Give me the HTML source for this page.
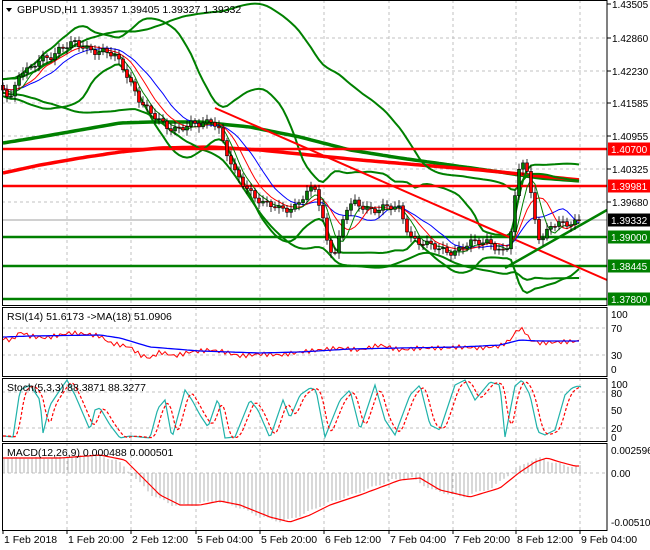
<!DOCTYPE html>
<html><head><meta charset="utf-8"><style>
html,body{margin:0;padding:0;background:#fff;}
svg{display:block;font-family:"Liberation Sans",sans-serif;}
</style></head><body>
<svg id="s" width="650" height="550" viewBox="0 0 650 550" xmlns="http://www.w3.org/2000/svg"></svg>
<script>
var S=document.getElementById('s'),out=[];
function add(t){out.push(t);}
function pl(pts,c,w,extra){add('<polyline fill="none" stroke="'+c+'" stroke-width="'+w+'" '+(extra||'')+' points="'+pts.map(function(p){return p[0].toFixed(1)+','+p[1].toFixed(1)}).join(' ')+'"/>');}
function interp(k,x){if(x<=k[0][0])return k[0][1];for(var i=1;i<k.length;i++){if(x<=k[i][0]){var a=k[i-1],b=k[i];return a[1]+(b[1]-a[1])*(x-a[0])/(b[0]-a[0]);}}return k[k.length-1][1];}
function curve(k,x0,x1,st){var r=[];for(var x=x0;x<=x1;x+=st)r.push([x,interp(k,x)]);return r;}
var vx=[67,131,196,260,324,389,453,516,580];
var panels=[[0,305],[307,376],[378,441],[443,530]];
vx.forEach(function(x){panels.forEach(function(p){add('<line x1="'+x+'" y1="'+p[0]+'" x2="'+x+'" y2="'+p[1]+'" stroke="#c0c0c0" stroke-dasharray="3,3"/>');});});
[38,71,103,136,169,202].forEach(function(y){add('<line x1="2" y1="'+y+'" x2="607" y2="'+y+'" stroke="#c0c0c0" stroke-dasharray="3,3"/>');});
[328,355,392,428,473].forEach(function(y){add('<line x1="2" y1="'+y+'" x2="607" y2="'+y+'" stroke="#c0c0c0" stroke-dasharray="3,3"/>');});
add('<line x1="2" y1="220" x2="607" y2="220" stroke="#c0c0c0" stroke-width="1.5"/>');
var P=[[-80,85],[3,90],[12,95],[20,70],[30,72],[40,60],[50,55],[60,48],[75,45],[90,48],[105,52],[115,58],[125,70],[135,90],[140,100],[150,115],[165,125],[180,128],[200,125],[212,118],[218,125],[225,150],[235,175],[245,185],[255,195],[265,205],[280,210],[295,205],[305,195],[315,190],[322,215],[328,245],[335,250],[340,235],[345,210],[355,205],[370,208],[385,208],[400,210],[410,235],[425,245],[440,250],[455,250],[470,245],[490,240],[500,250],[505,255],[510,240],[515,200],[520,165],[524,158],[528,172],[532,200],[538,235],[544,240],[550,228],[560,224],[570,221],[580,220]];
var cl=[],xs=[];
for(var i=-60;;i++){var x=3+4*i;if(x>580)break;var n=Math.sin(i*1.7)*3+Math.sin(i*0.63)*2.5;cl.push(interp(P,x)+n);xs.push(x);}
cl[cl.length-1]=220;
function sma(a,p){return a.map(function(v,i){var s=0,c=0;for(var j=Math.max(0,i-p+1);j<=i;j++){s+=a[j];c++;}return s/c;});}
function sd(a,p,m){return a.map(function(v,i){var s=0,c=0;for(var j=Math.max(0,i-p+1);j<=i;j++){s+=(a[j]-m[i])*(a[j]-m[i]);c++;}return Math.sqrt(s/c);});}
function vis(a){var r=[];for(var i=0;i<a.length;i++)if(xs[i]>=3)r.push([xs[i],Math.max(-5,Math.min(306,a[i]))]);return r;}
pl(curve([[3,143],[40,137],[80,130],[120,123],[150,122],[200,122],[250,127],[300,137],[350,150],[400,158],[450,165],[500,172],[540,178],[580,181]],3,580,4),'#008000',3.5);
pl(curve([[3,173],[40,165],[80,158],[120,152],[160,148],[210,147],[260,150],[310,155],[360,160],[420,165],[480,170],[540,176],[580,180]],3,580,4),'#ff0000',3.5);
var m20=sma(cl,20),s20=sd(cl,20,m20);
pl(vis(m20.map(function(v,i){return v-2*s20[i]-3})),'#008000',2);
pl(vis(m20.map(function(v,i){return v+2*s20[i]+3})),'#008000',2);
var m50=sma(cl,50),s50=sd(cl,50,m50);
pl(vis(m50.map(function(v,i){return v-2.2*s50[i]})),'#008000',2);
pl(vis(m50.map(function(v,i){return v+2.2*s50[i]})),'#008000',2);
[149,186].forEach(function(y){add('<line x1="2" y1="'+y+'" x2="607" y2="'+y+'" stroke="#ff0000" stroke-width="2.5"/>');});
[237,266,299].forEach(function(y){add('<line x1="2" y1="'+y+'" x2="607" y2="'+y+'" stroke="#008000" stroke-width="2.5"/>');});
add('<line x1="215" y1="108" x2="607" y2="280" stroke="#ff0000" stroke-width="2"/>');
add('<line x1="505" y1="268" x2="607" y2="210" stroke="#008000" stroke-width="2.5"/>');
pl(vis(sma(cl,13)),'#0000ff',1);pl(vis(sma(cl,8)),'#ff0000',1);pl(vis(sma(cl,5).map(function(v){return v+1})),'#008000',1);
for(var i=1;i<cl.length;i++){var x=xs[i];if(x<3)continue;var o=cl[i-1],c=cl[i];var hi=Math.min(o,c)-2-Math.abs(Math.sin(i*2.3))*4,lo=Math.max(o,c)+2+Math.abs(Math.cos(i*1.9))*4;
add('<line x1="'+x+'" y1="'+hi.toFixed(1)+'" x2="'+x+'" y2="'+lo.toFixed(1)+'" stroke="#000" stroke-width="0.8"/>');
var t=Math.min(o,c),h=Math.max(1,Math.abs(o-c));add('<rect x="'+(x-1.5)+'" y="'+t.toFixed(1)+'" width="3" height="'+h.toFixed(1)+'" fill="'+(c<o?'#008000':'#ff0000')+'" stroke="#000" stroke-width="0.6"/>');}
var rk=[[3,339],[12,340],[20,332],[30,336],[45,338],[60,335],[70,333],[85,334],[100,336],[110,343],[130,347],[140,355],[150,358],[160,352],[175,356],[190,352],[210,350],[225,352],[240,356],[260,354],[280,355],[300,352],[320,350],[340,348],[360,350],[380,345],[400,350],[420,348],[440,348],[460,347],[480,348],[500,346],[510,340],[518,329],[524,330],[530,340],[540,343],[560,342],[580,341]];
var rr=[];for(var x=3;x<=580;x+=3)rr.push([x,interp(rk,x)+Math.sin(x*0.9)*2.2]);pl(rr,'#ff0000',1);
pl(curve([[3,337],[30,336],[100,335],[120,338],[150,347],[200,351],[260,353],[300,352],[350,349],[400,348],[460,347],[500,345],[520,340],[540,341],[580,341]],3,580,4),'#0000ff',1.3);
var sk=[[3,436],[13,437],[20,390],[30,385],[40,400],[43,433],[50,405],[60,390],[67,380],[75,395],[90,430],[95,410],[100,408],[110,425],[120,438],[130,436],[140,437],[150,438],[158,408],[165,400],[172,438],[185,390],[192,400],[200,415],[208,427],[218,398],[225,438],[235,437],[250,400],[258,410],[270,438],[283,400],[290,418],[300,395],[310,388],[316,390],[325,437],[340,400],[350,390],[360,430],[375,385],[385,420],[395,435],[410,395],[420,385],[430,425],[440,430],[455,385],[465,380],[475,400],[490,382],[500,385],[505,437],[515,386],[522,380],[530,395],[538,432],[545,435],[555,430],[565,395],[572,388],[578,386],[581,387]];
pl(curve(sk,3,581,2),'#20b2aa',1.2);
var sd2=[];for(var x=3;x<=581;x+=2){var v=0;for(var k=0;k<5;k++)v+=interp(sk,x-2-k*1.5);sd2.push([x,v/5]);}
pl(sd2,'#ff0000',1.2,'stroke-dasharray="3,2"');
var mk=[[3,458],[60,458],[100,455],[125,460],[140,475],[160,495],[180,505],[200,505],[220,501],[240,505],[270,517],[290,522],[310,515],[330,505],[360,495],[400,480],[420,478],[440,490],[470,497],[500,488],[520,472],[535,462],[547,458],[560,462],[575,466],[580,466]];
for(var x=4;x<=580;x+=4){var v=interp(mk,x+8)+Math.sin(x*0.3);add('<line x1="'+x+'" y1="473" x2="'+x+'" y2="'+v.toFixed(1)+'" stroke="#b0b0b0"/>');}
pl(curve(mk,3,580,3),'#ff0000',1.2);
panels.forEach(function(p){add('<rect x="2.5" y="'+(p[0]+0.5)+'" width="604.5" height="'+(p[1]-p[0])+'" fill="none" stroke="#000"/>');});
function tx(x,y,t,c,fs){add('<text x="'+x+'" y="'+y+'" font-size="'+(fs||10)+'" fill="'+(c||'#000')+'">'+t+'</text>');}
[[1.43505,4],[1.42860,38],[1.42230,71],[1.41585,103],[1.40955,136],[1.40325,169],[1.39680,202]].forEach(function(p){add('<line x1="607" y1="'+p[1]+'" x2="611" y2="'+p[1]+'" stroke="#000"/>');tx(612,p[1]+4,p[0].toFixed(5));});
[['1.40700',149,'#ff0000','#fff'],['1.39981',186,'#ff0000','#fff'],['1.39332',220,'#000','#fff'],['1.39000',237,'#008000','#fff'],['1.38445',266,'#008000','#fff'],['1.37800',299,'#008000','#fff']].forEach(function(b){add('<rect x="608" y="'+(b[1]-6.5)+'" width="42" height="13" fill="'+b[2]+'"/>');tx(611,b[1]+4,b[0],b[3]);});
[['100',314],['70',328],['30',355],['0',369]].forEach(function(p){tx(611,p[1]+4,p[0]);});
[['100',384],['80',393],['50',410],['20',428],['0',437]].forEach(function(p){tx(611,p[1]+4,p[0]);});
[['0.002596',450],['0.00',473],['-0.005104',522]].forEach(function(p){tx(611,p[1]+4,p[0]);});
var tl=['1 Feb 2018','1 Feb 20:00','2 Feb 12:00','5 Feb 04:00','5 Feb 20:00','6 Feb 12:00','7 Feb 04:00','7 Feb 20:00','8 Feb 12:00','9 Feb 04:00'];
var tt=[3,67,131,196,260,324,389,453,516,580];
tl.forEach(function(t,i){add('<line x1="'+tt[i]+'" y1="530" x2="'+tt[i]+'" y2="534" stroke="#000"/>');tx(tt[i]+1,543,t,'#000',10.5);});
add('<polygon points="6,8 12,8 9,12" fill="#000"/>');
tx(17,13,'GBPUSD,H1  1.39357 1.39405 1.39327 1.39332','#000',10.5);
tx(7,320,'RSI(14) 51.6173  -&gt;MA(18) 51.0906','#000',10.5);
tx(7,391,'Stoch(5,3,3) 88.3871 88.3277','#000',10.5);
tx(7,456,'MACD(12,26,9) 0.000488 0.000501','#000',10.5);
S.innerHTML=out.join('');
</script>
</body></html>
